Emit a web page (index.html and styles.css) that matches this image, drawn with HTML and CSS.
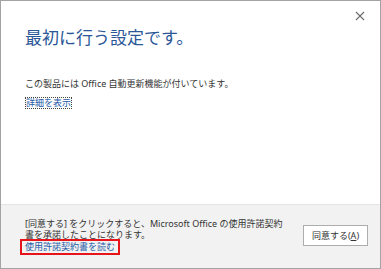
FILE: index.html
```html
<!DOCTYPE html>
<html>
  <head>
    <meta charset="UTF-8" />
    <title>最初に行う設定です。</title>
    <link rel="stylesheet" href="styles.css">
  </head>
  <body>
    <div class="window">
      <section class="main">
        <div class="titlebar">
          <button class="close" aria-label="閉じる">
            <svg width="10" height="10" viewBox="0 0 10 10">
              <path d="M1 1L9 9M9 1L1 9" stroke="#6b6b6b" stroke-width="1.1" fill="none" />
            </svg>
          </button>
        </div>
        <h1>最初に行う設定です。</h1>
        <p class="description">この製品には Office 自動更新機能が付いています。</p>
        <a href="#" class="details">詳細を表示</a>
      </section>

      <section class="footer">
        <div class="license">
          <p>[同意する] をクリックすると、Microsoft Office の使用許諾契約書を承諾したことになります。</p>
          <a href="#" class="read">使用許諾契約書を読む</a>
        </div>
        <button class="agree">同意する(<u>A</u>)</button>
      </section>
    </div>
  </body>
</html>
```

FILE: styles.css
```css
* {
  margin: 0;
  box-sizing: border-box;
  font-family: "Noto Sans", "Noto Sans CJK JP", sans-serif;
}

body {
  margin: 0;
  background: #ffffff;
}

.window {
  width: 381px;
  height: 269px;
  border: 1px solid #a3a3a3;
  display: flex;
  flex-direction: column;
  background: #ffffff;
}

.main {
  flex: 1;
  padding: 0 13px 0 24px;
}

.titlebar {
  display: flex;
  justify-content: flex-end;
  padding-top: 8px;
  height: 26px;
}

.close {
  border: none;
  background: none;
  padding: 0;
  width: 14px;
  height: 14px;
  display: flex;
  align-items: center;
  justify-content: center;
}

h1 {
  font-size: 17px;
  font-weight: 400;
  line-height: 22px;
  color: #2b5797;
  margin-bottom: 29px;
}

.description {
  font-size: 9px;
  line-height: 11px;
  color: #333333;
}

.details {
  display: inline-block;
  font-size: 9px;
  line-height: 9px;
  padding-bottom: 1px;
  color: #1f5aa6;
  text-decoration: none;
  border: 1px dotted #444444;
}

.footer {
  height: 64px;
  background: #f2f2f2;
  border-top: 1px solid #e4e4e4;
  display: flex;
  justify-content: space-between;
  align-items: flex-start;
  padding: 13px 12px 0 24px;
}

.license {
  width: 260px;
  font-size: 9px;
  line-height: 11px;
  color: #333333;
}

.read {
  display: inline-block;
  margin: -1px 0 0 -5px;
  padding: 0 3px 0 3px;
  border: 2px solid #e8141b;
  line-height: 12px;
  color: #1f5aa6;
  text-decoration: none;
}

.agree {
  margin-top: 7px;
  width: 65px;
  height: 21px;
  background: #ffffff;
  border: 1px solid #adadad;
  font-size: 9px;
  color: #333333;
  padding: 0;
}
```
